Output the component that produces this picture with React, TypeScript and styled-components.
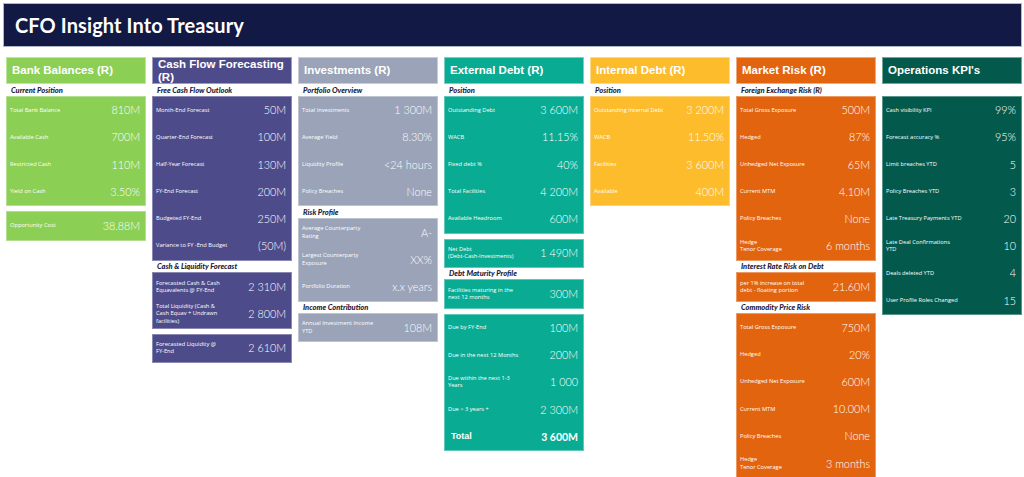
import React from 'react';
import styled, { createGlobalStyle } from 'styled-components';

interface IRow {
  label: string;
  value: string;
  total?: boolean;
}

interface IBlock {
  subtitle?: string;
  rows: IRow[];
}

interface IColumn {
  title: string;
  color: string;
  blocks: IBlock[];
}

const GlobalStyle = createGlobalStyle`
  html, body {
    margin: 0;
    padding: 0;
    background: #ffffff;
    overflow: hidden;
  }
  * {
    box-sizing: border-box;
  }
`;

const Page = styled.div`
  width: 1024px;
  padding: 3px 2px 0 3px;
  font-family: Lato, "Liberation Sans", sans-serif;
`;

const TitleBar = styled.header`
  height: 44px;
  display: flex;
  align-items: center;
  padding: 0 11px;
  background-color: #111944;
  border: 1px solid #aeb6c8;
`;

const Title = styled.h1`
  margin: 0;
  color: #ffffff;
  font-family: Lato, "Liberation Sans", sans-serif;
  font-weight: 700;
  font-size: 20px;
  letter-spacing: 0.1px;
`;

const Columns = styled.div`
  display: grid;
  grid-template-columns: repeat(7, 1fr);
  column-gap: 6px;
  padding: 10px 0 0 3px;
  align-items: start;
`;

const Column = styled.section`
  display: flex;
  flex-direction: column;
`;

const Header = styled.div<{ $color: string }>`
  height: 27px;
  display: flex;
  align-items: center;
  padding: 0 5px;
  background-color: ${({ $color }) => $color};
  border: 1px solid rgba(255, 255, 255, 0.45);
  color: #ffffff;
  font-family: "Liberation Sans", Arial, sans-serif;
  font-weight: 700;
  font-size: 11.5px;
  line-height: 13px;
`;

const Subtitle = styled.div`
  height: 11.6px;
  display: flex;
  align-items: flex-end;
  padding: 0 5px 1px;
  color: #1b2138;
  font-family: Lato, "Liberation Sans", sans-serif;
  font-weight: 900;
  font-style: italic;
  font-size: 7.5px;
  line-height: 8px;
  white-space: nowrap;
`;

const Card = styled.div<{ $color: string; $gap: boolean }>`
  margin-top: ${({ $gap }) => ($gap ? '5px' : '0')};
  background-color: ${({ $color }) => $color};
  border: 1px solid rgba(255, 255, 255, 0.35);
`;

const Row = styled.div`
  height: 27.2px;
  display: flex;
  align-items: center;
  justify-content: space-between;
  padding: 0 5px 0 3px;
  color: #ffffff;
`;

const Label = styled.span<{ $total?: boolean }>`
  white-space: pre-line;
  font-family: ${({ $total }) => ($total ? '"Liberation Sans", Arial, sans-serif' : '"Open Sans", "Liberation Sans", sans-serif')};
  font-weight: ${({ $total }) => ($total ? 700 : 500)};
  font-size: ${({ $total }) => ($total ? '9px' : '5.7px')};
  line-height: 7.3px;
  padding-left: ${({ $total }) => ($total ? '3px' : '0')};
`;

const Value = styled.span<{ $total?: boolean }>`
  white-space: nowrap;
  font-family: Lato, "Liberation Sans", sans-serif;
  font-weight: ${({ $total }) => ($total ? 700 : 300)};
  font-size: ${({ $total }) => ($total ? '10.5px' : '10.8px')};
  line-height: 12px;
`;

const columns: IColumn[] = [
  {
    title: 'Bank Balances (R)',
    color: '#8bcf55',
    blocks: [
      {
        subtitle: 'Current Position',
        rows: [
          { label: 'Total Bank Balance', value: '810M' },
          { label: 'Available Cash', value: '700M' },
          { label: 'Restricted Cash', value: '110M' },
          { label: 'Yield on Cash', value: '3.50%' },
        ],
      },
      { rows: [{ label: 'Opportunity Cost', value: '38.88M' }] },
    ],
  },
  {
    title: 'Cash Flow Forecasting (R)',
    color: '#4e4b8a',
    blocks: [
      {
        subtitle: 'Free Cash Flow Outlook',
        rows: [
          { label: 'Month-End Forecast', value: '50M' },
          { label: 'Quarter-End Forecast', value: '100M' },
          { label: 'Half-Year Forecast', value: '130M' },
          { label: 'FY-End Forecast', value: '200M' },
          { label: 'Budgeted FY-End', value: '250M' },
          { label: 'Variance to FY -End Budget', value: '(50M)' },
        ],
      },
      {
        subtitle: 'Cash & Liquidity Forecast',
        rows: [
          { label: 'Forecasted Cash & Cash\nEquavalents @ FY-End', value: '2 310M' },
          { label: 'Total Liquidity (Cash &\nCash Equav + Undrawn\nfacilities)', value: '2 800M' },
        ],
      },
      { rows: [{ label: 'Forecasted Liquidity @\nFY-End', value: '2 610M' }] },
    ],
  },
  {
    title: 'Investments (R)',
    color: '#9aa3b8',
    blocks: [
      {
        subtitle: 'Portfolio Overview',
        rows: [
          { label: 'Total Investments', value: '1 300M' },
          { label: 'Average Yield', value: '8.30%' },
          { label: 'Liquidity Profile', value: '<24 hours' },
          { label: 'Policy Breaches', value: 'None' },
        ],
      },
      {
        subtitle: 'Risk Profile',
        rows: [
          { label: 'Average Counterparty\nRating', value: 'A-' },
          { label: 'Largest Counterparty\nExposure', value: 'XX%' },
          { label: 'Portfolio Duration', value: 'x.x years' },
        ],
      },
      {
        subtitle: 'Income Contribution',
        rows: [{ label: 'Annual Investment Income\nYTD', value: '108M' }],
      },
    ],
  },
  {
    title: 'External Debt (R)',
    color: '#0aab93',
    blocks: [
      {
        subtitle: 'Position',
        rows: [
          { label: 'Outstanding Debt', value: '3 600M' },
          { label: 'WACB', value: '11.15%' },
          { label: 'Fixed debt %', value: '40%' },
          { label: 'Total Facilities', value: '4 200M' },
          { label: 'Available Headroom', value: '600M' },
        ],
      },
      { rows: [{ label: 'Net Debt\n(Debt-Cash-Investments)', value: '1 490M' }] },
      {
        subtitle: 'Debt Maturity Profile',
        rows: [{ label: 'Facilities maturing in the\nnext 12 months', value: '300M' }],
      },
      {
        rows: [
          { label: 'Due by FY-End', value: '100M' },
          { label: 'Due in the next 12 Months', value: '200M' },
          { label: 'Due within the next 1-3\nYears', value: '1 000' },
          { label: 'Due > 3 years +', value: '2 300M' },
          { label: 'Total', value: '3 600M', total: true },
        ],
      },
    ],
  },
  {
    title: 'Internal Debt (R)',
    color: '#fcbc2b',
    blocks: [
      {
        subtitle: 'Position',
        rows: [
          { label: 'Outstanding Internal Debt', value: '3 200M' },
          { label: 'WACB', value: '11.50%' },
          { label: 'Facilities', value: '3 600M' },
          { label: 'Available', value: '400M' },
        ],
      },
    ],
  },
  {
    title: 'Market Risk (R)',
    color: '#e2640f',
    blocks: [
      {
        subtitle: 'Foreign Exchange Risk (R)',
        rows: [
          { label: 'Total Gross Exposure', value: '500M' },
          { label: 'Hedged', value: '87%' },
          { label: 'Unhedged Net Exposure', value: '65M' },
          { label: 'Current MTM', value: '4.10M' },
          { label: 'Policy Breaches', value: 'None' },
          { label: 'Hedge\nTenor Coverage', value: '6 months' },
        ],
      },
      {
        subtitle: 'Interest Rate Risk on Debt',
        rows: [{ label: 'per 1% increase on total\ndebt - floating portion', value: '21.60M' }],
      },
      {
        subtitle: 'Commodity Price Risk',
        rows: [
          { label: 'Total Gross Exposure', value: '750M' },
          { label: 'Hedged', value: '20%' },
          { label: 'Unhedged Net Exposure', value: '600M' },
          { label: 'Current MTM', value: '10.00M' },
          { label: 'Policy Breaches', value: 'None' },
          { label: 'Hedge\nTenor Coverage', value: '3 months' },
        ],
      },
    ],
  },
  {
    title: "Operations KPI's",
    color: '#035a4c',
    blocks: [
      {
        subtitle: '',
        rows: [
          { label: 'Cash visibility KPI', value: '99%' },
          { label: 'Forecast accuracy %', value: '95%' },
          { label: 'Limit breaches YTD', value: '5' },
          { label: 'Policy Breaches YTD', value: '3' },
          { label: 'Late Treasury Payments YTD', value: '20' },
          { label: 'Late Deal Confirmations\nYTD', value: '10' },
          { label: 'Deals deleted YTD', value: '4' },
          { label: 'User Profile Roles Changed', value: '15' },
        ],
      },
    ],
  },
];

export default function App() {
  return (
    <Page>
      <GlobalStyle />
      <TitleBar>
        <Title>CFO Insight Into Treasury</Title>
      </TitleBar>
      <Columns>
        {columns.map((column) => (
          <Column key={column.title}>
            <Header $color={column.color}>{column.title}</Header>
            {column.blocks.map((block, index) => (
              <React.Fragment key={`${column.title}-${index}`}>
                {block.subtitle !== undefined && <Subtitle>{block.subtitle}</Subtitle>}
                <Card $color={column.color} $gap={block.subtitle === undefined}>
                  {block.rows.map((row) => (
                    <Row key={row.label}>
                      <Label $total={row.total}>{row.label}</Label>
                      <Value $total={row.total}>{row.value}</Value>
                    </Row>
                  ))}
                </Card>
              </React.Fragment>
            ))}
          </Column>
        ))}
      </Columns>
    </Page>
  );
}
